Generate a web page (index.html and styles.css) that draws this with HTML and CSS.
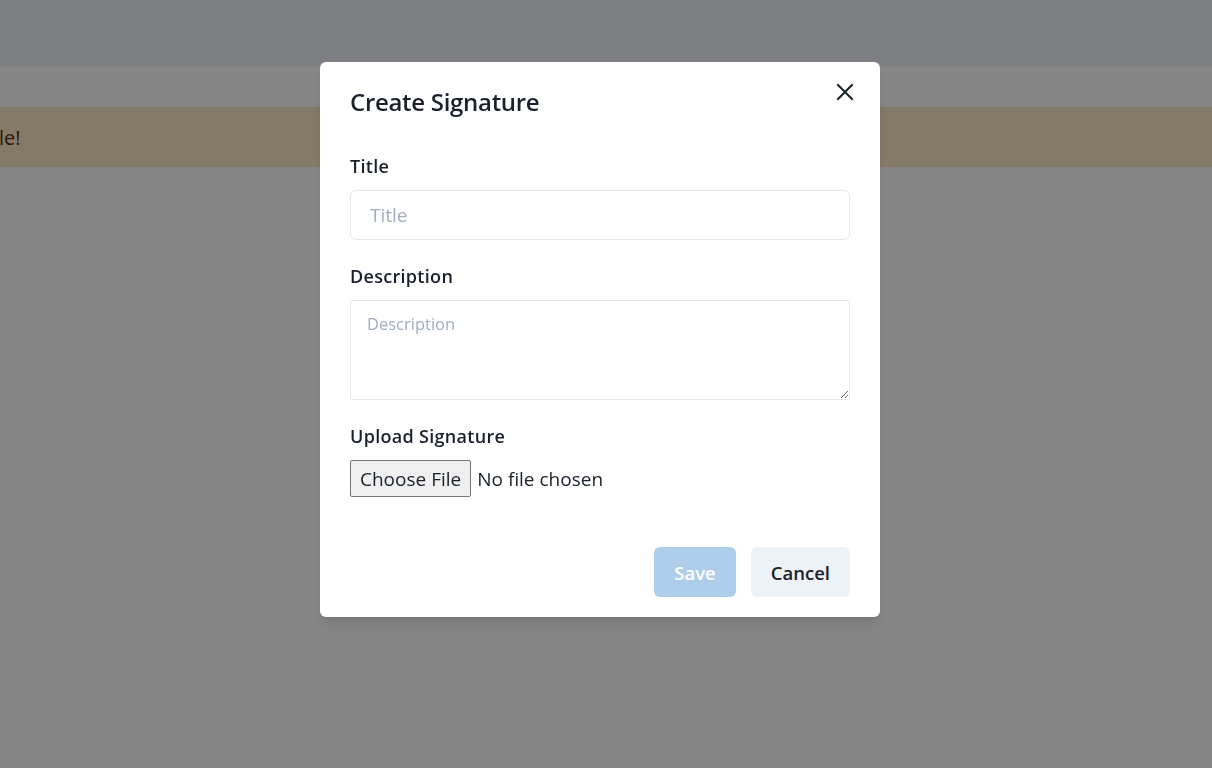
FILE: index.html
```html
<!DOCTYPE html>
<html lang="en">
<head>
<meta charset="utf-8">
<title>Create Signature</title>
<link rel="stylesheet" href="styles.css">
</head>
<body>
<div class="page">
  <header class="topbar"></header>
  <div class="strip"></div>
  <div class="alert"><span class="alert-text">le!</span></div>
</div>
<div class="overlay"></div>
<div class="modal-wrap">
  <section class="modal" role="dialog" aria-labelledby="modal-title">
    <h2 class="modal-title" id="modal-title">Create Signature</h2>
    <button class="close-btn" type="button" aria-label="Close">
      <svg width="18" height="18" viewBox="0 0 18 18" fill="none" stroke="#1a202c" stroke-width="2" stroke-linecap="square">
        <path d="M2 2 L16 16 M16 2 L2 16"/>
      </svg>
    </button>
    <form class="modal-body">
      <div class="field">
        <label class="label" for="title">Title</label>
        <input class="input" id="title" type="text" placeholder="Title">
      </div>
      <div class="field">
        <label class="label" for="desc">Description</label>
        <textarea class="textarea" id="desc" placeholder="Description"></textarea>
      </div>
      <div class="field">
        <label class="label" for="file">Upload Signature</label>
        <input class="file" id="file" type="file">
      </div>
    </form>
    <footer class="modal-footer">
      <button class="btn btn-save" type="button" disabled>Save</button>
      <button class="btn btn-cancel" type="button">Cancel</button>
    </footer>
  </section>
</div>
</body>
</html>
```
FILE: styles.css
```css
* { box-sizing: border-box; }
html, body { margin: 0; padding: 0; }
body {
  font-family: "Open Sans", "Noto Sans", sans-serif;
  color: #1a202c;
  background: #ffffff;
  width: 1212px;
  height: 768px;
  overflow: hidden;
}
.page { display: flex; flex-direction: column; }
.topbar { height: 67px; background: #f1f3f9; }
.strip { height: 40px; background: #ffffff; }
.alert {
  height: 60px;
  background: #fbebc8;
  display: flex;
  align-items: center;
}
.alert-text { font-size: 20px; color: #5a2d0c; margin-left: -1px; }
.overlay {
  position: fixed;
  inset: 0;
  background: rgba(0, 0, 0, 0.48);
}
.modal-wrap {
  position: fixed;
  inset: 0;
  display: flex;
  justify-content: center;
  align-items: flex-start;
  padding-top: 62px;
  padding-right: 12px;
}
.modal {
  position: relative;
  width: 560px;
  background: #ffffff;
  border-radius: 6px;
  box-shadow: 0 10px 15px -3px rgba(0,0,0,0.1), 0 4px 6px -2px rgba(0,0,0,0.05);
  display: flex;
  flex-direction: column;
}
.modal-title {
  margin: 0;
  padding: 25px 30px 24px;
  font-size: 24px;
  font-weight: 600;
  line-height: 29px;
  letter-spacing: -0.3px;
  color: #1a202c;
}
.close-btn {
  position: absolute;
  right: 19px;
  top: 14px;
  width: 32px;
  height: 32px;
  border: 0;
  background: transparent;
  display: flex;
  align-items: center;
  justify-content: center;
  padding: 0;
  cursor: pointer;
}
.modal-body {
  padding: 14px 30px 34px;
  display: flex;
  flex-direction: column;
  gap: 24px;
}
.field { display: flex; flex-direction: column; align-items: flex-start; }
.label {
  font-size: 18px;
  font-weight: 600;
  line-height: 24px;
  margin-bottom: 12px;
  color: #1a202c;
  letter-spacing: 0.3px;
}
.input {
  width: 100%;
  height: 50px;
  border: 1px solid #e2e8f0;
  border-radius: 6px;
  padding: 0 19px;
  font-family: inherit;
  font-size: 19px;
  color: #1a202c;
  outline: none;
}
.input::placeholder, .textarea::placeholder { color: #a0aec0; }
.textarea {
  width: 100%;
  height: 100px;
  border: 1px solid #e2e8f0;
  border-radius: 2px;
  padding: 12px 16px;
  font-family: inherit;
  font-size: 16.5px;
  line-height: 22px;
  color: #1a202c;
  outline: none;
  resize: vertical;
}
.file {
  font-family: inherit;
  font-size: 19px;
  color: #1a202c;
  height: 37px;
}
.file::file-selector-button {
  font-family: inherit;
  font-size: 19px;
  height: 37px;
  padding: 0 9px;
  margin-right: 6px;
  background: #efefef;
  border: 1px solid #767676;
  border-radius: 2px;
  color: #1a202c;
}
.modal-footer {
  display: flex;
  justify-content: flex-end;
  gap: 15px;
  padding: 16px 30px 20px;
}
.btn {
  height: 50px;
  padding: 0 20px;
  border: 0;
  border-radius: 6px;
  font-family: inherit;
  font-size: 18.5px;
  font-weight: 600;
}
.btn-save { background: #adcdeb; color: #ffffff; }
.btn-cancel { background: #edf2f7; color: #1a202c; }
```
